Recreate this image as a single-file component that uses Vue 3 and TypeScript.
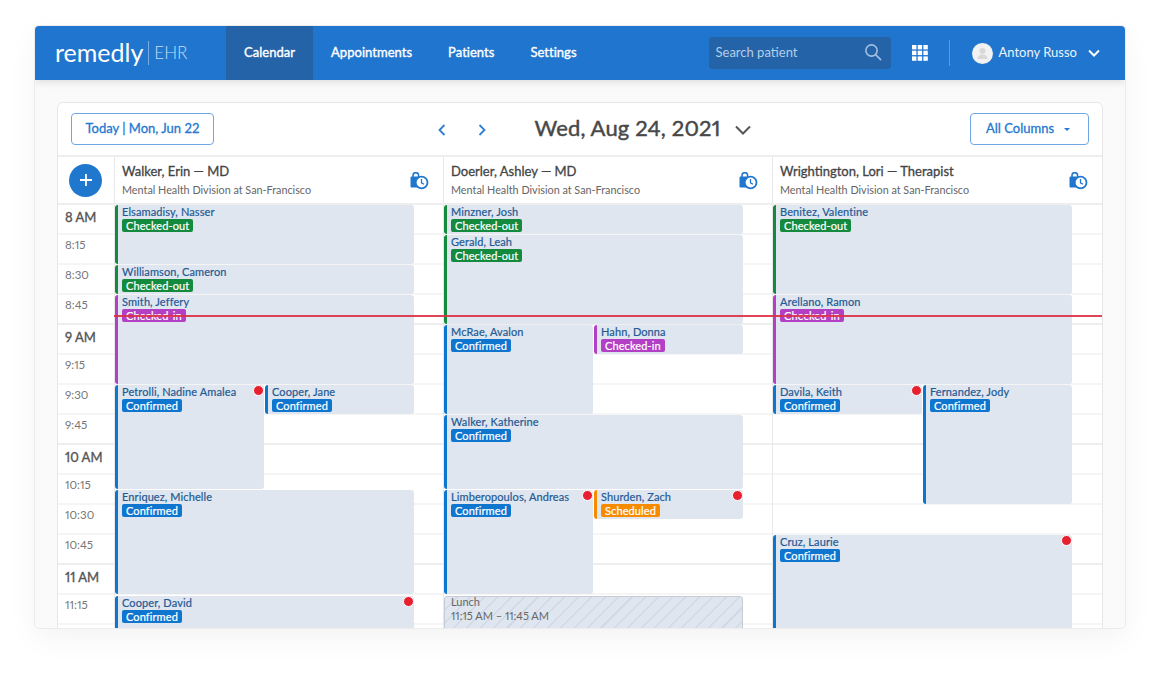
<script setup lang="ts">
type Status = 'out' | 'in' | 'conf' | 'sched'
type Span = 'full' | 'left' | 'right'
interface Appt { name: string; status: Status; top: number; end: number; span: Span; dot?: boolean; nudge?: boolean }
interface Day { title: string; appts: Appt[]; lunch?: boolean }

const labels: Record<Status, string> = { out: 'Checked-out', in: 'Checked-in', conf: 'Confirmed', sched: 'Scheduled' }
const times = ['8 AM', '8:15', '8:30', '8:45', '9 AM', '9:15', '9:30', '9:45', '10 AM', '10:15', '10:30', '10:45', '11 AM', '11:15', '']
const nav = ['Calendar', 'Appointments', 'Patients', 'Settings']

// top / end are in half-slots of 15px, counted from 8 AM
const days: Day[] = [
  { title: 'Walker, Erin — MD', appts: [
    { name: 'Elsamadisy, Nasser', status: 'out', top: 0, end: 4, span: 'full' },
    { name: 'Williamson, Cameron', status: 'out', top: 4, end: 6, span: 'full' },
    { name: 'Smith, Jeffery', status: 'in', top: 6, end: 12, span: 'full' },
    { name: 'Petrolli, Nadine Amalea', status: 'conf', top: 12, end: 19, span: 'left', dot: true },
    { name: 'Cooper, Jane', status: 'conf', top: 12, end: 14, span: 'right' },
    { name: 'Enriquez, Michelle', status: 'conf', top: 19, end: 26, span: 'full' },
    { name: 'Cooper, David', status: 'conf', top: 26, end: 32, span: 'full', dot: true, nudge: true },
  ] },
  { title: 'Doerler, Ashley — MD', lunch: true, appts: [
    { name: 'Minzner, Josh', status: 'out', top: 0, end: 2, span: 'full' },
    { name: 'Gerald, Leah', status: 'out', top: 2, end: 8, span: 'full' },
    { name: 'McRae, Avalon', status: 'conf', top: 8, end: 14, span: 'left' },
    { name: 'Hahn, Donna', status: 'in', top: 8, end: 10, span: 'right' },
    { name: 'Walker, Katherine', status: 'conf', top: 14, end: 19, span: 'full' },
    { name: 'Limberopoulos, Andreas', status: 'conf', top: 19, end: 26, span: 'left', dot: true },
    { name: 'Shurden, Zach', status: 'sched', top: 19, end: 21, span: 'right', dot: true },
  ] },
  { title: 'Wrightington, Lori — Therapist', appts: [
    { name: 'Benitez, Valentine', status: 'out', top: 0, end: 6, span: 'full' },
    { name: 'Arellano, Ramon', status: 'in', top: 6, end: 12, span: 'full' },
    { name: 'Davila, Keith', status: 'conf', top: 12, end: 14, span: 'left', dot: true },
    { name: 'Fernandez, Jody', status: 'conf', top: 12, end: 20, span: 'right' },
    { name: 'Cruz, Laurie', status: 'conf', top: 22, end: 32, span: 'full', dot: true },
  ] },
]

function place(a: { top: number; end: number; span: Span }) {
  const col = a.span === 'full' ? '1 / 3' : a.span === 'left' ? '1 / 2' : '2 / 3'
  return { gridRow: `${a.top + 1} / ${a.end + 1}`, gridColumn: col }
}
</script>

<template>
  <div class="page">
    <div class="app">
      <header class="top">
        <div class="logo"><span class="word">remedly</span><span class="ehr">EHR</span></div>
        <nav class="nav">
          <a v-for="(n, i) in nav" :key="n" class="tab" :class="{ active: i === 0 }">{{ n }}</a>
        </nav>
        <div class="top-right">
          <div class="search">
            <span>Search patient</span>
            <svg width="18" height="18" viewBox="0 0 18 18" fill="none" stroke="#9fc0e4" stroke-width="1.6"><circle cx="7.5" cy="7.5" r="5.6" /><path d="M11.6 11.6 16.6 16.6" stroke-linecap="round" /></svg>
          </div>
          <svg class="apps" width="16" height="16" viewBox="0 0 16 16" fill="#fff">
            <rect v-for="c in 9" :key="c" :x="((c - 1) % 3) * 5.7" :y="Math.floor((c - 1) / 3) * 5.7" width="4.4" height="4.4" />
          </svg>
          <div class="sep"></div>
          <div class="avatar">
            <svg width="21" height="21" viewBox="0 0 21 21"><circle cx="10.5" cy="10.5" r="10.5" fill="#f2f2f2" /><circle cx="10.5" cy="8" r="3" fill="#d9d9d9" /><path d="M5.5 16c0-3 2-4.5 5-4.5s5 1.500 5 4.500z" fill="#d9d9d9" /></svg>
          </div>
          <span class="user">Antony Russo</span>
          <svg width="12" height="8" viewBox="0 0 12 8" fill="none" stroke="#fff" stroke-width="2"><path d="M1 1.500 6 6.500 11 1.500" /></svg>
        </div>
      </header>

      <main class="body">
        <section class="panel">
          <div class="toolbar">
            <button class="btn today">Today | Mon, Jun 22</button>
            <div class="date">
              <svg class="arrow" width="8" height="12" viewBox="0 0 8 12" fill="none" stroke="#2f7fd0" stroke-width="1.800"><path d="M6.500 1 1.500 6 6.500 11" /></svg>
              <svg class="arrow" width="8" height="12" viewBox="0 0 8 12" fill="none" stroke="#2f7fd0" stroke-width="1.800"><path d="M1.500 1 6.500 6 1.500 11" /></svg>
              <h1>Wed, Aug 24, 2021</h1>
              <svg width="16" height="10" viewBox="0 0 16 10" fill="none" stroke="#555" stroke-width="2"><path d="M1 1.500 8 8.500 15 1.500" /></svg>
            </div>
            <button class="btn cols">All Columns<i class="caret"></i></button>
          </div>

          <div class="heads">
            <div class="add-cell">
              <div class="add"><svg width="14" height="14" viewBox="0 0 14 14" stroke="#fff" stroke-width="1.800"><path d="M7 1V13M1 7H13" /></svg></div>
            </div>
            <div v-for="d in days" :key="d.title" class="head">
              <div class="head-text">
                <div class="doc">{{ d.title }}</div>
                <div class="div">Mental Health Division at San-Francisco</div>
              </div>
              <svg class="bag" width="19" height="18" viewBox="0 0 19 18">
                <path d="M3 5.500V3.500a2.800 2.800 0 0 1 5.600 0V5.500" fill="none" stroke="#1f77ce" stroke-width="1.500" />
                <path d="M1.500 4.500h10a1 1 0 0 1 1 1v9a1 1 0 0 1-1 1h-10a1 1 0 0 1-1-1v-9a1 1 0 0 1 1-1z" fill="#1f77ce" />
                <circle cx="11.600" cy="10.500" r="5.900" fill="#fff" stroke="#1f77ce" stroke-width="1.800" />
                <path d="M11.500 7V10.800L14 12.200" fill="none" stroke="#1f77ce" stroke-width="1.300" />
              </svg>
            </div>
          </div>

          <div class="schedule">
            <div class="times">
              <div v-for="(t, i) in times" :key="i" class="time" :class="{ hour: i % 4 === 0, endhour: i % 4 === 3 }">{{ t }}</div>
            </div>
            <div v-for="d in days" :key="d.title" class="day">
              <div v-for="(t, i) in times" :key="i" class="slot" :class="{ endhour: i % 4 === 3 }" :style="{ gridRow: `${i * 2 + 1} / span 2` }"></div>
              <div
                v-for="a in d.appts"
                :key="a.name"
                class="appt"
                :class="[a.status, { nudge: a.nudge }]"
                :style="place(a)"
              >
                <div class="name">{{ a.name }}</div>
                <span class="tag">{{ labels[a.status] }}</span>
                <i v-if="a.dot" class="dot"></i>
              </div>
              <div v-if="d.lunch" class="lunch" :style="place({ top: 26, end: 32, span: 'full' })">
                <div>Lunch</div>
                <div>11:15 AM – 11:45 AM</div>
              </div>
            </div>
            <div class="now"></div>
          </div>
        </section>
      </main>
    </div>
  </div>
</template>

<style>
html, body { margin: 0; background: #fff; }
</style>

<style scoped>
.page {
  width: 1160px;
  height: 673px;
  padding: 26px 35px 0;
  box-sizing: border-box;
  overflow: hidden;
  font-family: Lato, "Open Sans", sans-serif;
  font-variant-numeric: proportional-nums;
  color: #444;
}
.app {
  height: 602px;
  display: flex;
  flex-direction: column;
  border-radius: 4px;
  box-shadow: 0 0 0 1px #ececec, 0 10px 30px rgba(0, 0, 0, .05);
  background: #fafafa;
  overflow: hidden;
}
.top {
  height: 54px;
  flex: none;
  display: flex;
  align-items: stretch;
  background: #2076ce;
  color: #fff;
  box-shadow: 0 2px 8px rgba(0, 0, 0, .12);
  position: relative;
  z-index: 1;
}
.logo { width: 191px; display: flex; align-items: center; padding-left: 20px; box-sizing: border-box; }
.word { font-size: 25px; font-weight: 400; padding-right: 5px; line-height: 26px; margin-top: -3px; }
.ehr { font-size: 17px; font-weight: 300; color: #c5dcf4; border-left: 1px solid #79ade4; padding-left: 5px; line-height: 24px; }
.nav { display: flex; }
.tab { display: flex; align-items: center; padding: 0 18px 2px; font-size: 13px; font-weight: 400; letter-spacing: .03px; -webkit-text-stroke: .35px #fff; }
.tab.active { background: #2563a8; }
.top-right { margin-left: auto; display: flex; align-items: center; padding-right: 25px; }
.search {
  width: 182px;
  height: 32px;
  box-sizing: border-box;
  background: #2563a8;
  border-radius: 3px;
  display: flex;
  align-items: center;
  justify-content: space-between;
  padding: 0 9px 2px 7px;
  font-size: 13px;
  color: #b4cee9;
}
.apps { margin-left: 21px; }
.sep { width: 1px; height: 26px; background: #5b9bdd; margin: 0 22px 0 21px; }
.avatar { width: 21px; height: 21px; }
.user { font-size: 13px; margin: -2px 11px 0 6px; color: #eaf2fb; }

.body { flex: 1; padding: 22px 22px 0; min-height: 0; overflow: hidden; }
.panel {
  background: #fff;
  border: 1px solid #e6e6e6;
  border-radius: 6px 6px 0 0;
  height: 700px;
}
.toolbar {
  height: 54px;
  box-sizing: border-box;
  display: flex;
  align-items: center;
  justify-content: space-between;
  padding: 0 13px;
  border-bottom: 2px solid #eee;
}
.btn {
  height: 32px;
  box-sizing: border-box;
  border: 1px solid #6ea7e3;
  border-radius: 4px;
  background: #fff;
  color: #2478cf;
  font: 400 13px Lato, sans-serif;
  -webkit-text-stroke: .3px #2478cf;
  padding: 0 0 2px;
}
.today { width: 143px; }
.cols { width: 119px; display: flex; align-items: center; justify-content: center; gap: 10px; padding-right: 3px; }
.caret { border: 3.500px solid transparent; border-top-color: #2478cf; border-bottom: 0; margin-top: 2px; }
.date { display: flex; align-items: center; margin-right: -4px; padding-top: 2px; }
.arrow + .arrow { margin-left: 32px; }
.date h1 { margin: 0 14px 6px 49px; font-size: 22px; font-weight: 400; -webkit-text-stroke: .45px #484848; letter-spacing: .15px; color: #484848; }

.heads { display: grid; grid-template-columns: 56px 329px 329px 1fr; height: 48px; border-bottom: 2px solid #eee; box-sizing: border-box; }
.add-cell { display: flex; align-items: center; padding-left: 11px; }
.add { width: 33px; height: 33px; border-radius: 50%; background: #1f77ce; display: flex; align-items: center; justify-content: center; }
.head { border-left: 1px solid #e8e8e8; display: flex; align-items: center; justify-content: space-between; padding: 0 14px 0 7px; }
.doc { font-size: 13px; font-weight: 400; -webkit-text-stroke: .3px #444; color: #444; line-height: 16px; }
.div { font-size: 10.800px; color: #666; margin-top: 4px; line-height: 14px; }
.bag { margin-top: 1px; }

.schedule { display: grid; grid-template-columns: 56px 329px 329px 1fr; position: relative; }
.times { display: flex; flex-direction: column; }
.time {
  height: 30px;
  box-sizing: border-box;
  padding: 2px 0 0 7px;
  font-size: 11.500px;
  color: #777;
  border-bottom: 2px solid #f5f5f5;
  line-height: 16px;
}
.time.hour { font-size: 13px; font-weight: 400; -webkit-text-stroke: .35px #555; color: #555; padding-top: 4px; }
.endhour { border-bottom-color: #eee !important; }
.day {
  border-left: 1px solid #e8e8e8;
  display: grid;
  grid-template-columns: 150px 150px 1fr;
  grid-auto-rows: 15px;
}
.slot { grid-column: 1 / -1; border-bottom: 2px solid #f5f5f5; }
.appt {
  position: relative;
  background: #e0e6ef;
  border-left: 3px solid #0f76d0;
  border-radius: 3px;
  margin: 0 1px 1px 0;
  padding: 0 0 0 4px;
  min-height: 0;
  overflow: visible;
}
.appt.nudge { margin-top: 1px; margin-bottom: 0; }
.name { font-size: 11px; line-height: 14px; color: #1f5a95; white-space: nowrap; -webkit-text-stroke: .2px #1f5a95; letter-spacing: .1px; }
.tag {
  display: inline-block;
  height: 13px;
  line-height: 13px;
  padding: 0 4px;
  border-radius: 2px;
  font-size: 11px;
  color: #fff;
  -webkit-text-stroke: .2px #fff;
  letter-spacing: .1px;
  background: #0f76d0;
  vertical-align: top;
}
.out { border-left-color: #138a3e; }
.out .tag { background: #138a3e; }
.in { border-left-color: #b33fc4; }
.in .tag { background: #b33fc4; }
.sched { border-left-color: #f68b00; }
.sched .tag { background: #f68b00; }
.dot {
  position: absolute;
  top: 0;
  right: 0;
  width: 9px;
  height: 9px;
  border-radius: 50%;
  background: #e6202f;
  border: 1px solid #fff;
}
.lunch {
  margin-top: 1px;
  border: 1px solid #c5ccd6;
  border-radius: 3px;
  margin-right: 1px;
  padding: 0 0 0 6px;
  font-size: 11px;
  line-height: 14px;
  color: #666;
  background: repeating-linear-gradient(135deg, #e0e6ef 0 8px, #d2d9e4 8px 9.500px);
}
.lunch > div:first-child { margin-top: -2px; }
.now {
  position: absolute;
  left: 56px;
  right: 0;
  top: 110px;
  height: 2px;
  background: #dc3045;
  opacity: .9;
}
</style>
